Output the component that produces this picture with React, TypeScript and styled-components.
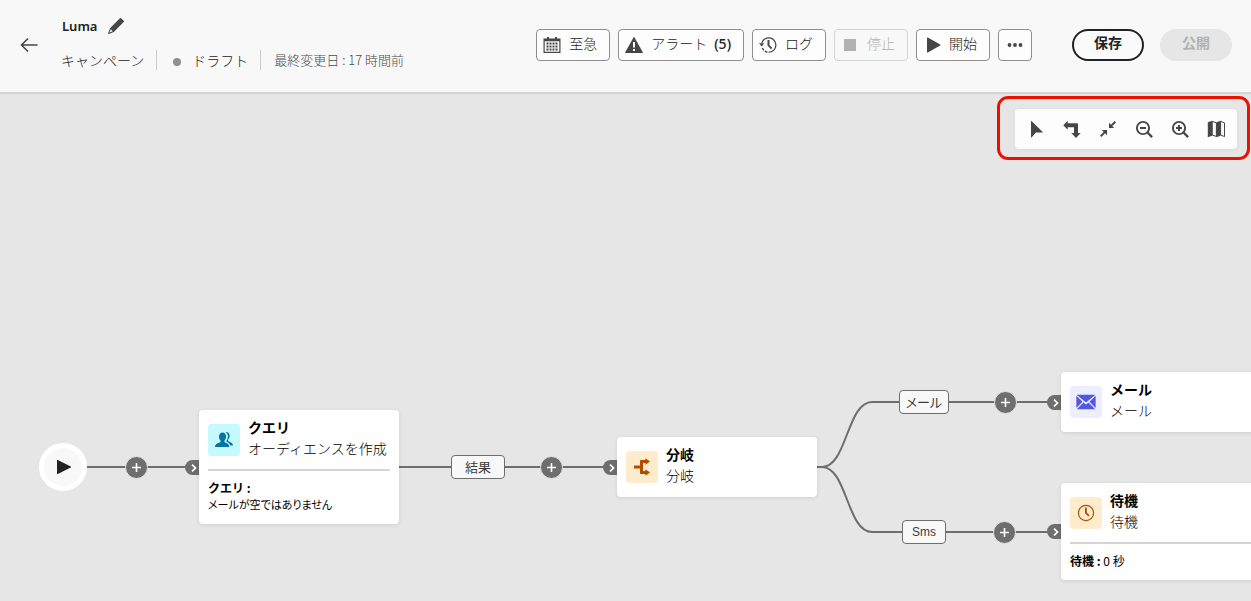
import React from "react";
import styled, { createGlobalStyle, css } from "styled-components";

const EDGE = "#6e6e6e";

const GlobalStyle = createGlobalStyle`
  *, *::before, *::after { box-sizing: border-box; }
  body {
    margin: 0;
    background: #e6e6e6;
    color: #222;
    font-family: "Noto Sans CJK JP", "Noto Sans", sans-serif;
    font-size: 14px;
    line-height: 20px;
  }
  button { font: inherit; color: inherit; cursor: pointer; }
  button:disabled { cursor: default; }
  svg { display: block; flex: none; }
`;

const Page = styled.div`
  display: flex;
  flex-direction: column;
  min-height: 100vh;
`;

const Header = styled.header`
  display: flex;
  align-items: flex-start;
  padding: 16px 19px 22px 19px;
  background: #f8f8f8;
  border-bottom: 2px solid #d5d5d5;
`;

const PlainButton = styled.button`
  display: flex;
  align-items: center;
  justify-content: center;
  padding: 0;
  border: 0;
  background: transparent;
  color: #464646;
`;

const BackButton = styled(PlainButton)`
  width: 20px;
  height: 20px;
  margin: 19px 22px 0 0;
`;

const Heading = styled.div`
  display: flex;
  flex-direction: column;
  gap: 14px;
`;

const TitleRow = styled.div`
  display: flex;
  align-items: center;
  gap: 10px;
  padding-left: 1px;
`;

const Title = styled.h1`
  margin: 0;
  font-family: "Noto Sans", sans-serif;
  font-size: 13px;
  font-weight: 600;
  line-height: 20px;
  color: #222;
`;

const Meta = styled.div`
  display: flex;
  align-items: center;
  font-weight: 300;
`;

const MetaItem = styled.span<{ $small?: boolean }>`
  display: flex;
  align-items: center;
  gap: 11px;
  white-space: nowrap;
  ${(p) =>
    p.$small
      ? css`
          font-size: 13px;
          color: #4b4b4b;
        `
      : css`
          color: #222;
        `}

  & + & {
    margin-left: 12px;
    padding-left: 13px;
    border-left: 1px solid #cacaca;
  }
`;

const StatusDot = styled.span`
  width: 8px;
  height: 8px;
  margin: 3px 0 0 3px;
  border-radius: 50%;
  background: #909090;
`;

const Actions = styled.div`
  display: flex;
  gap: 8px;
  margin: 13px 0 0 auto;
`;

const ActionButton = styled.button`
  display: flex;
  align-items: center;
  gap: 8px;
  height: 32px;
  padding: 0 12px 4px 6px;
  border: 1px solid #909090;
  border-radius: 4px;
  background: #fdfdfd;
  color: #222;
  font-weight: 300;
  white-space: nowrap;

  svg { color: #464646; margin-top: 4px; }

  &:disabled {
    border-color: #d5d5d5;
    background: #f8f8f8;
    color: #b1b1b1;
  }
  &:disabled svg { color: #b1b1b1; }
`;

const Count = styled.span`
  margin-left: 7px;
  font-family: "Noto Sans", sans-serif;
  font-weight: 500;
`;

const MoreButton = styled(ActionButton)`
  padding: 0 7px 4px;
`;

const CtaGroup = styled.div`
  display: flex;
  gap: 16px;
  margin-left: 32px;
`;

const PillButton = styled.button`
  width: 72px;
  height: 32px;
  padding: 0 0 6px;
  border: 2px solid #222;
  border-radius: 16px;
  background: #fafafa;
  font-weight: 700;

  &:disabled {
    border-color: #e6e6e6;
    background: #e6e6e6;
    color: #b1b1b1;
  }
`;

const Canvas = styled.main`
  position: relative;
  flex: 1;
  min-height: 507px;
  overflow: hidden;
`;

const ToolFrame = styled.div`
  position: absolute;
  top: 2px;
  right: 1px;
  padding: 10px 10px 8px 15px;
  border: 3px solid #eb1000;
  border-radius: 11px;
`;

const ToolBar = styled.div`
  display: flex;
  padding: 2px 3px;
  border-radius: 4px;
  background: #fdfdfd;
  box-shadow: 0 1px 4px rgba(0, 0, 0, 0.06);
`;

const ToolButton = styled(PlainButton)`
  width: 36px;
  height: 36px;
`;

const Edges = styled.svg`
  position: absolute;
  top: 0;
  left: 0;
  fill: none;
  stroke: ${EDGE};
  stroke-width: 2;
`;

type At = { $x: number; $y: number };

const placed = css<At>`
  position: absolute;
  left: ${(p) => p.$x}px;
  top: ${(p) => p.$y}px;
`;

const StartNode = styled.button<At>`
  ${placed}
  display: flex;
  align-items: center;
  justify-content: center;
  width: 48px;
  height: 48px;
  padding: 0 0 0 1px;
  border: 5px solid #fff;
  border-radius: 50%;
  background: #f8f8f8;
`;

const AddNode = styled.button<At>`
  ${placed}
  display: flex;
  align-items: center;
  justify-content: center;
  width: 23px;
  height: 23px;
  padding: 0;
  border: 1px solid #e6e6e6;
  border-radius: 50%;
  background: ${EDGE};
`;

const Port = styled.span<At>`
  ${placed}
  display: flex;
  align-items: center;
  justify-content: center;
  width: 14px;
  height: 15px;
  padding-left: 3px;
  border-radius: 8px 0 0 8px;
  background: ${EDGE};
`;

const EdgeLabel = styled.span<At & { $w: number; $latin?: boolean }>`
  ${placed}
  width: ${(p) => p.$w}px;
  height: 24px;
  border: 1px solid ${EDGE};
  border-radius: 4px;
  background: #f8f8f8;
  color: #3c3c3c;
  font-family: ${(p) => (p.$latin ? '"Liberation Sans", sans-serif' : "inherit")};
  font-size: ${(p) => (p.$latin ? 12 : 13)}px;
  font-feature-settings: "palt";
  line-height: 22px;
  text-align: center;
`;

const Card = styled.section<At>`
  ${placed}
  width: 200px;
  min-height: 60px;
  padding: 0 9px;
  border-radius: 4px;
  background: #fff;
  color: #000;
  box-shadow: 0 1px 4px rgba(0, 0, 0, 0.1);
`;

const CardHead = styled.div`
  display: flex;
  align-items: center;
  gap: 8px;
  height: 59px;
  line-height: 21px;
  font-weight: 300;
  white-space: nowrap;
`;

const CardText = styled.div`
  padding-bottom: 3px;
`;

const CardTitle = styled.h2`
  margin: 0;
  font-size: 14px;
  font-weight: 700;
  line-height: 21px;
`;

const Tile = styled.span<{ $bg: string; $fg: string }>`
  display: flex;
  flex: none;
  align-items: center;
  justify-content: center;
  width: 32px;
  height: 32px;
  border-radius: 4px;
  background: ${(p) => p.$bg};
  color: ${(p) => p.$fg};
`;

const CardBody = styled.div`
  padding: 8px 0 11px;
  border-top: 2px solid #d5d5d5;
  font-size: 12px;
  line-height: 17px;
`;

const Detail = styled.div`
  font-size: 11px;
  font-feature-settings: "palt";
`;

const Icon = ({ size = 18, children }: { size?: number; children: React.ReactNode }) => (
  <svg width={size} height={size} viewBox="0 0 18 18" fill="currentColor" aria-hidden="true">
    {children}
  </svg>
);

const BackIcon = () => (
  <Icon>
    <path d="M8 2.500 1.500 9 8 15.500M1.500 9H17.500" fill="none" stroke="currentColor" strokeWidth="1.600" />
  </Icon>
);
const EditIcon = () => (
  <Icon>
    <path d="M12.900 1.300a.9.900 0 0 1 1.300 0l2.500 2.500a.9.900 0 0 1 0 1.300L6.800 15 1.600 16.900a.4.400 0 0 1-.5-.5L3 11.200zM3.800 12.300l-1.300 3.200 3.200-1.300z" fillRule="evenodd" />
  </Icon>
);
const CalendarIcon = () => (
  <Icon>
    <path d="M1 2.500h3V1h1.600v1.500h6.800V1H14v1.500h3.500V17H.5V2.500zM1.700 5.200v10.600h14.600V5.200z" fillRule="evenodd" />
    <path d="M4 1h2v3.500H4zM12 1h2v3.500h-2z" />
    <path d="M3.500 6.500h2v2h-2zM6.500 6.500h2v2h-2zM9.500 6.500h2v2h-2zM12.500 6.500h2v2h-2zM3.500 9.500h2v2h-2zM6.500 9.500h2v2h-2zM9.500 9.500h2v2h-2zM12.500 9.500h2v2h-2zM3.500 12.500h2v2h-2zM6.500 12.500h2v2h-2zM9.500 12.500h2v2h-2zM12.500 12.500h2v2h-2z" />
  </Icon>
);
const AlertIcon = () => (
  <Icon>
    <path d="M8.600 1.200.1 16.400a.4.400 0 0 0 .4.600h17a.4.400 0 0 0 .4-.6L9.400 1.200a.45.450 0 0 0-.8 0zM8 6h2v5.500H8zM8 13h2v2H8z" fillRule="evenodd" />
  </Icon>
);
const LogIcon = () => (
  <Icon>
    <path d="M2.800 7A7.200 7.200 0 0 1 16.900 9a7.200 7.200 0 0 1-7.200 7.200" fill="none" stroke="currentColor" strokeWidth="1.300" />
    <path d="M8.500 16.100A7.200 7.200 0 0 1 3 11.600" fill="none" stroke="currentColor" strokeWidth="1.300" strokeDasharray="2.800 1.200" />
    <path d="M0 7.200h5.200L2.700 10.400z" />
    <path d="M8.500 4h2v5l2.700 3-1.200 1.200-3.500-3.600z" />
  </Icon>
);
const StopIcon = () => (
  <Icon>
    <rect x="3" y="3" width="12" height="12" rx=".5" />
  </Icon>
);
const PlayIcon = () => (
  <Icon>
    <path d="M4 2a.5.500 0 0 1 .8-.4l12.400 7a.45.450 0 0 1 0 .8L4.800 16.400A.5.500 0 0 1 4 16z" />
  </Icon>
);
const MoreIcon = () => (
  <Icon>
    <circle cx="3.500" cy="9" r="1.900" />
    <circle cx="9" cy="9" r="1.900" />
    <circle cx="14.500" cy="9" r="1.900" />
  </Icon>
);
const SelectIcon = () => (
  <Icon>
    <path d="M4 1.300v15.900a.3.300 0 0 0 .5.200L9 12.500h6.500a.3.300 0 0 0 .2-.5L4.500 1.100a.3.300 0 0 0-.5.200z" />
  </Icon>
);
const TurnIcon = () => (
  <Icon>
    <path d="M.3 5.300 4.700.8v2.500H14a1 1 0 0 1 1 1V13h2.700L13 18l-4.800-5H11V7.300H4.700v2.400z" />
  </Icon>
);
const CollapseIcon = () => (
  <Icon>
    <path d="M10 2.800V8h5.200l-1.900-1.900 3.700-3.700L15.600 1l-3.700 3.700zM8 15.200V10H2.800l1.900 1.900L1 15.600 2.400 17l3.700-3.700z" />
  </Icon>
);
const ZoomIcon = ({ plus }: { plus?: boolean }) => (
  <Icon>
    <circle cx="8" cy="8" r="6.100" fill="none" stroke="currentColor" strokeWidth="1.900" />
    <path d="m12.300 12.300 4.800 4.800" stroke="currentColor" strokeWidth="2.300" />
    <path d={plus ? "M5 8h6M8 5v6" : "M5 8h6"} stroke="currentColor" strokeWidth="2" />
  </Icon>
);
const MapIcon = () => (
  <Icon>
    <path d="M.8 2.300 5.200.7v15L.8 17.300zM9.400 2.300 13.600.7v15l-4.200 1.600z" />
    <path d="M5.200 1.300 9.400 2.900v13.600l-4.200-1.500zM13.600 1.300l3.900 1.600v13.700l-3.900-1.600z" fill="none" stroke="currentColor" strokeWidth="1" />
  </Icon>
);
const AudienceIcon = () => (
  <Icon>
    <path d="M7.500 1.500c2.300 0 3.600 1.700 3.600 4 0 1.700-.7 3.200-1.600 4.100v1.200c0 .4.300.6.700.8 2.600.8 4 1.900 4 4.400H0c0-2.500 1.800-3.700 4.700-4.400.5-.1.800-.4.800-.8V9.600C4.600 8.700 4 7.200 4 5.500c0-2.300 1.300-4 3.500-4z" />
    <path d="M10.300 1c2.600-.4 4.300 1.200 4.300 3.700 0 1.700-.6 3-1.500 3.900v1.100c0 .4.300.7.800.9 2.400.8 3.900 1.700 4 4h-2.700c-.3-1.900-1.500-3-3.700-3.800v-1.200c.9-1 1.400-2.400 1.400-4.100 0-2-.9-3.600-2.600-4.500z" />
  </Icon>
);
const ForkIcon = () => (
  <Icon>
    <path d="M1 7.500h6V2.800a.8.800 0 0 1 .8-.8h4.700V.2L17 3.500l-4.500 3.300V5H10v8h2.500v-1.800l4.500 3.300-4.500 3.300V16H7.800a.8.800 0 0 1-.8-.8v-4.700H1z" />
  </Icon>
);
const MailIcon = () => (
  <Icon size={20}>
    <path d="M.5 2.500h17L9 9.500zM.300 3.300l5.600 5.500-5.600 5.700zM17.700 3.300v11.200l-5.600-5.700zM6.700 9.500 9 11.200l2.300-1.700 6 6H.7z" />
  </Icon>
);
const ClockIcon = () => (
  <Icon>
    <circle cx="9" cy="9" r="7.600" fill="none" stroke="currentColor" strokeWidth="1.200" />
    <path d="M8 3.500h1.800v5l2.800 2.900-1.200 1.200L8 9.200z" />
  </Icon>
);

const Add = ({ x, y }: { x: number; y: number }) => (
  <AddNode $x={x} $y={y} aria-label="追加">
    <svg width="9" height="9" viewBox="0 0 9 9" stroke="#fff" strokeWidth="1.600">
      <path d="M4.500 0v9M0 4.500h9" />
    </svg>
  </AddNode>
);

const InPort = ({ x, y }: { x: number; y: number }) => (
  <Port $x={x} $y={y}>
    <svg width="6" height="8" viewBox="0 0 6 8" fill="none" stroke="#fff" strokeWidth="1.700">
      <path d="M1 .7 4.500 4 1 7.300" />
    </svg>
  </Port>
);

type NodeProps = {
  x: number;
  y: number;
  title: string;
  subtitle: string;
  bg: string;
  fg: string;
  icon: React.ReactNode;
  children?: React.ReactNode;
};

const FlowCard = ({ x, y, title, subtitle, bg, fg, icon, children }: NodeProps) => (
  <Card $x={x} $y={y}>
    <CardHead>
      <Tile $bg={bg} $fg={fg}>
        {icon}
      </Tile>
      <CardText>
        <CardTitle>{title}</CardTitle>
        {subtitle}
      </CardText>
    </CardHead>
    {children && <CardBody>{children}</CardBody>}
  </Card>
);

const tools: [string, React.ReactNode][] = [
  ["選択", <SelectIcon />],
  ["向きを変更", <TurnIcon />],
  ["画面に合わせる", <CollapseIcon />],
  ["ズームアウト", <ZoomIcon />],
  ["ズームイン", <ZoomIcon plus />],
  ["マップ", <MapIcon />],
];

export default function App() {
  return (
    <Page lang="ja">
      <GlobalStyle />
      <Header>
        <BackButton aria-label="戻る">
          <BackIcon />
        </BackButton>
        <Heading>
          <TitleRow>
            <Title>Luma</Title>
            <PlainButton aria-label="編集">
              <EditIcon />
            </PlainButton>
          </TitleRow>
          <Meta>
            <MetaItem>キャンペーン</MetaItem>
            <MetaItem>
              <StatusDot />
              ドラフト
            </MetaItem>
            <MetaItem $small>最終変更日 : 17 時間前</MetaItem>
          </Meta>
        </Heading>
        <Actions>
          <ActionButton>
            <CalendarIcon />
            至急
          </ActionButton>
          <ActionButton>
            <AlertIcon />
            <span>
              アラート<Count>(5)</Count>
            </span>
          </ActionButton>
          <ActionButton>
            <LogIcon />
            ログ
          </ActionButton>
          <ActionButton disabled>
            <StopIcon />
            停止
          </ActionButton>
          <ActionButton>
            <PlayIcon />
            開始
          </ActionButton>
          <MoreButton aria-label="その他">
            <MoreIcon />
          </MoreButton>
          <CtaGroup>
            <PillButton>保存</PillButton>
            <PillButton disabled>公開</PillButton>
          </CtaGroup>
        </Actions>
      </Header>
      <Canvas>
        <Edges width="1070" height="500">
          <path d="M87 373H199M399 373H617M817 373H822C847 373 847 308 872 308H1061M817 373H822C847 373 847 438 872 438H1061" />
        </Edges>

        <StartNode $x={39} $y={349} aria-label="開始">
          <svg width="14" height="14" viewBox="0 0 14 14" fill="#222">
            <path d="M0 .5A.5.500 0 0 1 .8.100l12.900 6.500a.4.400 0 0 1 0 .8L.8 13.900a.5.500 0 0 1-.8-.4z" />
          </svg>
        </StartNode>
        <Add x={125} y={362} />
        <InPort x={185} y={366} />
        <FlowCard x={199} y={316} title="クエリ" subtitle="オーディエンスを作成" bg="#c5f8ff" fg="#0074a2" icon={<AudienceIcon />}>
          <b>クエリ :</b>
          <Detail>メールが空ではありません</Detail>
        </FlowCard>

        <EdgeLabel $x={451} $y={361} $w={54}>結果</EdgeLabel>
        <Add x={540} y={362} />
        <InPort x={603} y={366} />
        <FlowCard x={617} y={343} title="分岐" subtitle="分岐" bg="#ffeccc" fg="#b14c00" icon={<ForkIcon />} />

        <EdgeLabel $x={899} $y={296} $w={50}>メール</EdgeLabel>
        <Add x={994} y={297} />
        <InPort x={1047} y={301} />
        <FlowCard x={1061} y={278} title="メール" subtitle="メール" bg="#edeeff" fg="#5258e4" icon={<MailIcon />} />

        <EdgeLabel $x={902} $y={426} $w={44} $latin>Sms</EdgeLabel>
        <Add x={993} y={427} />
        <InPort x={1047} y={430} />
        <FlowCard x={1061} y={389} title="待機" subtitle="待機" bg="#ffeccc" fg="#b14c00" icon={<ClockIcon />}>
          <b>待機 :</b> 0 秒
        </FlowCard>

        <ToolFrame>
          <ToolBar role="toolbar">
            {tools.map(([label, icon]) => (
              <ToolButton key={label} aria-label={label}>
                {icon}
              </ToolButton>
            ))}
          </ToolBar>
        </ToolFrame>
      </Canvas>
    </Page>
  );
}
